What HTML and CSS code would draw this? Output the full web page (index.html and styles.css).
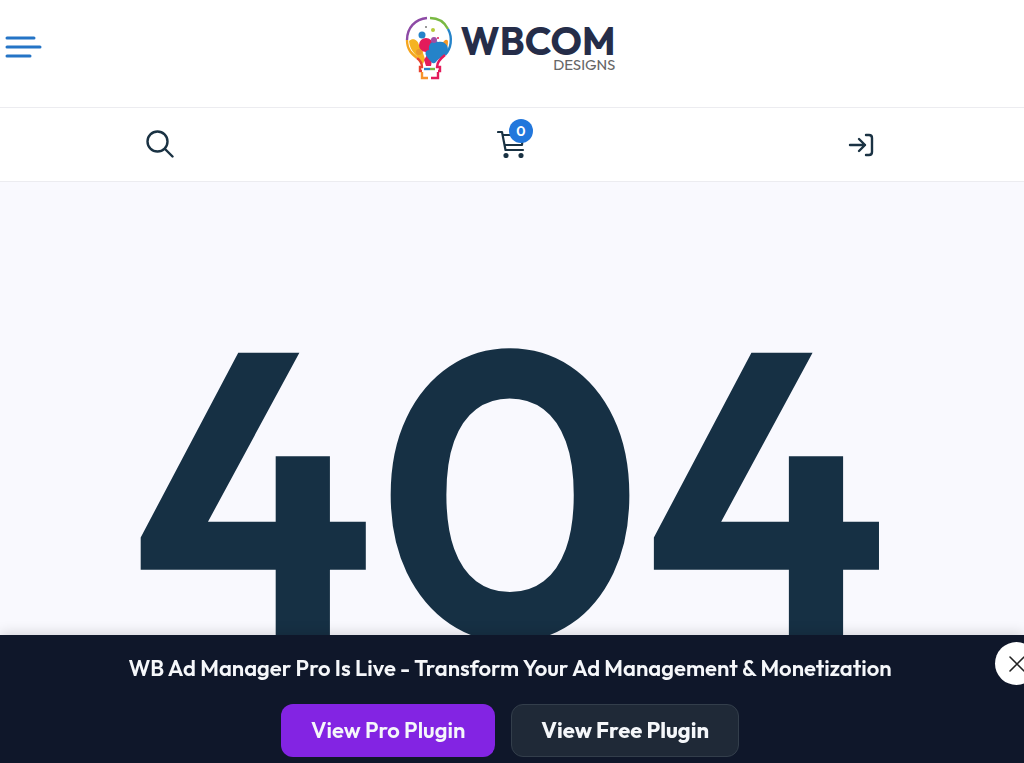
FILE: index.html
```html
<!DOCTYPE html>
<html lang="en">
<head>
<meta charset="utf-8">
<meta name="viewport" content="width=device-width, initial-scale=1">
<title>Page not found - WBCOM Designs</title>
<link rel="stylesheet" href="styles.css">
</head>
<body>
<header class="site-header">
  <div class="brand-bar">
    <button class="menu-button" type="button" aria-label="Open menu">
      <svg width="38" height="22" viewBox="0 0 38 22" fill="none" stroke="#2474c6" stroke-width="3" stroke-linecap="round"><path d="M3 2H30M3 11H36M3 20H26"/></svg>
    </button>
    <a class="brand" href="#" aria-label="WBCOM Designs home">
      <svg class="brand-mark" width="48" height="64" viewBox="0 0 48 64" fill="none">
        <path d="M4 25C8 21 13 24 14 29C18 31 18 34 18 37L20 43L18 48L15 44C12 39 5 36 4 25Z" fill="#f5b321"/>
        <path d="M37 29C38 24 43 22 43 26C43 35 37 39 34 42L30 38Z" fill="#f79a27"/>
        <circle cx="21" cy="29" r="7" fill="#e31b5b"/>
        <path d="M19 32L28 38 26 50H21L19 44L22 39Z" fill="#e31b5b"/>
        <path d="M24 34C23 27 29 23 33 26C41 24 45 32 42 37C39 42 34 41 31 46C28 50 25 44 22 41C19 37 21 34 24 34Z" fill="#2583c9"/>
        <circle cx="14" cy="36" r="3" fill="#e9972d"/>
        <circle cx="29" cy="24" r="3" fill="#9d4fa5"/>
        <circle cx="17" cy="19" r="3.500" fill="#2583c9"/>
        <circle cx="28" cy="14" r="2" fill="#b5cc38"/>
        <circle cx="21" cy="11" r="1" fill="#777"/>
        <circle cx="33" cy="22" r="1" fill="#e31b5b"/>
        <g stroke-width="2.400">
          <path d="M22 2C10 3 2 12 2 24" stroke="#8d4aa5"/>
          <path d="M2 24C2 34 7 38 12 42" stroke="#f5a51f"/>
          <path d="M12 42C16 45 17 48 17 51H15V55H17" stroke="#e8432f"/>
          <path d="M25 2C34 2 40 7 43 13" stroke="#79b943"/>
          <path d="M43 13C48 22 46 33 40 39" stroke="#2583c9"/>
          <path d="M40 39C35 43 32 46 32 51H35V55H33" stroke="#e31b5b"/>
          <path d="M17 56V62H23" stroke="#f7942a"/>
          <path d="M26 62H33V56" stroke="#e31b5b"/>
          <path d="M19 53H25" stroke="#2583c9"/>
          <path d="M25 53H30" stroke="#79b943"/>
        </g>
      </svg>
      <span class="brand-text"><span class="brand-name">WBCOM</span><span class="brand-sub">DESIGNS</span></span>
    </a>
  </div>
  <nav class="tool-bar" aria-label="Shop tools">
    <button class="tool" type="button" aria-label="Search">
      <svg width="28" height="28" viewBox="0 0 28 28" fill="none" stroke="#1a3243" stroke-width="2.400" stroke-linecap="round"><circle cx="11.500" cy="11.500" r="10"/><path d="M19 19L26.500 26.500"/></svg>
    </button>
    <a class="tool cart" href="#" aria-label="Cart, 0 items">
      <svg width="28" height="28" viewBox="0 0 28 28" fill="none" stroke="#1a3243" stroke-width="2.200" stroke-linecap="round" stroke-linejoin="round"><path d="M1 2H5L8.500 20H26M6 5H26L25 15H8"/><circle cx="9" cy="25.500" r="1.500" fill="#1a3243"/><circle cx="24" cy="25.500" r="1.500" fill="#1a3243"/></svg>
      <span class="cart-count">0</span>
    </a>
    <a class="tool" href="#" aria-label="Log in">
      <svg width="26" height="28" viewBox="0 0 26 28" fill="none" stroke="#1a3243" stroke-width="2.400" stroke-linecap="round" stroke-linejoin="round"><path d="M2 15H17M11 9L17 15L11 21M18 5H21Q24 5 24 8V22Q24 25 21 25H18"/></svg>
    </a>
  </nav>
</header>
<main class="error-page">
  <h1 class="error-code">404</h1>
</main>
<aside class="promo" aria-label="Announcement">
  <p class="promo-text">WB Ad Manager Pro Is Live - Transform Your Ad Management &amp; Monetization</p>
  <div class="promo-actions">
    <a class="promo-button promo-button-pro" href="#">View Pro Plugin</a>
    <a class="promo-button promo-button-free" href="#">View Free Plugin</a>
  </div>
  <button class="promo-close" type="button" aria-label="Close announcement">
    <svg width="16" height="16" viewBox="0 0 16 16" fill="none" stroke="#222" stroke-width="1.600" stroke-linecap="round"><path d="M1 1L15 15M15 1L1 15"/></svg>
  </button>
</aside>
</body>
</html>
```

FILE: styles.css
```css
* { box-sizing: border-box; }
html { overflow: hidden; }
body {
  margin: 0;
  min-height: 100vh;
  background: #f9f9fe;
  color: #163044;
  font-family: Outfit, Lato, sans-serif;
}
button { padding: 0; border: 0; background: none; cursor: pointer; }
a { color: inherit; text-decoration: none; }
svg { display: block; }
.site-header { background: #fff; border-bottom: 1px solid #ececf0; }
.brand-bar {
  display: grid;
  grid-template-columns: 1fr auto 1fr;
  align-items: start;
  padding: 16px 4px 27px;
  border-bottom: 1px solid #ececf0;
}
.menu-button { justify-self: start; margin-top: 20px; }
.brand { display: flex; gap: 8px; margin-right: 4px; }
.brand-text { display: flex; flex-direction: column; align-items: flex-end; padding-top: 8px; }
.brand-name { font-size: 39px; font-weight: 700; line-height: 34px; color: #252d49; }
.brand-sub { font-size: 15px; line-height: 14px; color: #666; }
.tool-bar {
  display: flex;
  justify-content: space-around;
  height: 73px;
  padding: 22px 4px 0 0;
  margin: 0 -16px;
}
.tool { position: relative; align-self: flex-start; }
.cart-count {
  position: absolute;
  top: -11px;
  left: 12px;
  width: 24px;
  border-radius: 50%;
  background: #2277dc;
  color: #fff;
  font-size: 14px;
  font-weight: 600;
  line-height: 24px;
  text-align: center;
}
.error-page { padding: 106px 4px 0 0; }
.error-code {
  margin: 0;
  font-size: 406px;
  font-weight: 600;
  line-height: 400px;
  text-align: center;
}
.promo {
  position: fixed;
  inset: auto 0 0;
  padding: 18px 4px 6px 0;
  background: #0f172a;
  color: #f5f7fa;
  font-size: 22px;
  font-weight: 600;
  text-align: center;
  box-shadow: 0 -2px 12px rgba(0, 0, 0, 0.15);
}
.promo-text { margin: 0 0 21px; line-height: 30px; }
.promo-actions { display: flex; justify-content: center; gap: 16px; }
.promo-button {
  padding: 0 29px;
  border: 1px solid transparent;
  border-radius: 12px;
  line-height: 51px;
}
.promo-button-pro { background: #8324e3; }
.promo-button-free { border-color: #333e4b; background: #1f2937; font-weight: 700; }
.promo-close {
  position: absolute;
  top: 7px;
  right: -14px;
  display: grid;
  place-items: center;
  width: 43px;
  height: 43px;
  border-radius: 50%;
  background: #fff;
}
```
